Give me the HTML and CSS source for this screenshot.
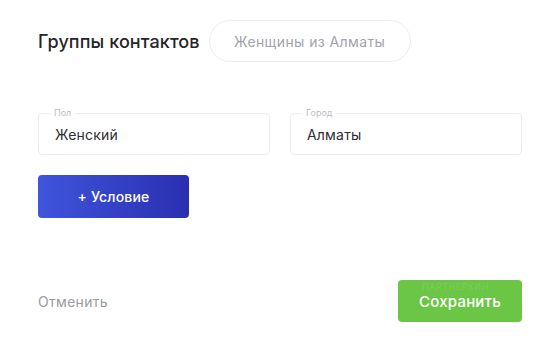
FILE: index.html
```html
<!DOCTYPE html>
<html lang="ru">
<head>
    <meta charset="UTF-8">
    <meta name="viewport" content="width=device-width, initial-scale=1.0">
    <title>Группы контактов</title>
    <link rel="stylesheet" href="styles.css">
</head>
<body>
    <div class="panel">
        <!-- заголовок и название группы -->
        <div class="head">
            <h1 class="title">Группы контактов</h1>
            <div class="pill">Женщины из Алматы</div>
        </div>

        <!-- условия -->
        <div class="fields">
            <div class="field">
                <span class="label">Пол</span>
                <span class="value">Женский</span>
            </div>
            <div class="field">
                <span class="label">Город</span>
                <span class="value">Алматы</span>
            </div>
        </div>

        <button class="add" type="button">+ Условие</button>

        <div class="footer">
            <a class="cancel" href="#">Отменить</a>
            <div class="save-wrap">
                <button class="save" type="button">Сохранить</button>
                <span class="mark">ПАРТНЕРКИН</span>
            </div>
        </div>
    </div>
</body>
</html>
```

FILE: styles.css
```css
body {
    margin: 0;
    background: #ffffff;
    font-family: Inter, "Noto Sans", sans-serif;
    color: #2b2b2f;
}

.panel {
    width: 484px;
    padding: 20px 0 0 38px;
}

.head {
    display: flex;
    align-items: center;
    gap: 9px;
}

.title {
    margin: 0;
    font-size: 18px;
    font-weight: 500;
    letter-spacing: 0.1px;
    color: #26262a;
}

.pill {
    width: 200px;
    height: 40px;
    border: 1px solid #ececf3;
    border-radius: 21px;
    display: flex;
    align-items: center;
    justify-content: center;
    font-size: 14px;
    letter-spacing: 0.4px;
    color: #a3a3ab;
}

.fields {
    display: flex;
    gap: 20px;
    margin-top: 51px;
}

.field {
    position: relative;
    width: 214px;
    height: 40px;
    border: 1px solid #ececf3;
    border-radius: 4px;
    display: flex;
    align-items: center;
    padding-left: 16px;
}

.label {
    position: absolute;
    top: -7px;
    left: 11px;
    padding: 0 4px;
    background: #fff;
    font-size: 9px;
    color: #bdbdc5;
}

.value {
    font-size: 14px;
    letter-spacing: 0.2px;
    color: #2e2e33;
}

.add {
    margin-top: 20px;
    width: 151px;
    height: 43px;
    border: none;
    border-radius: 4px;
    background: linear-gradient(90deg, #3f55dc, #2a2fb0);
    color: #fff;
    font-family: inherit;
    font-size: 14px;
    font-weight: 500;
    letter-spacing: 0.2px;
    cursor: pointer;
}

.footer {
    display: flex;
    align-items: center;
    justify-content: space-between;
    margin-top: 62px;
}

.cancel {
    font-size: 14px;
    letter-spacing: 0.3px;
    color: #9b9b9f;
    text-decoration: none;
}

.save-wrap {
    position: relative;
}

.save {
    width: 124px;
    height: 42px;
    border: none;
    border-radius: 4px;
    background: #6cc646;
    color: #fff;
    font-family: inherit;
    font-size: 15px;
    font-weight: 500;
    letter-spacing: 0.2px;
    cursor: pointer;
    display: block;
}

/* водяной знак поверх кнопки */
.mark {
    position: absolute;
    top: 1px;
    left: 24px;
    font-size: 9px;
    letter-spacing: 0.5px;
    color: rgba(255, 255, 255, 0.12);
}
```
